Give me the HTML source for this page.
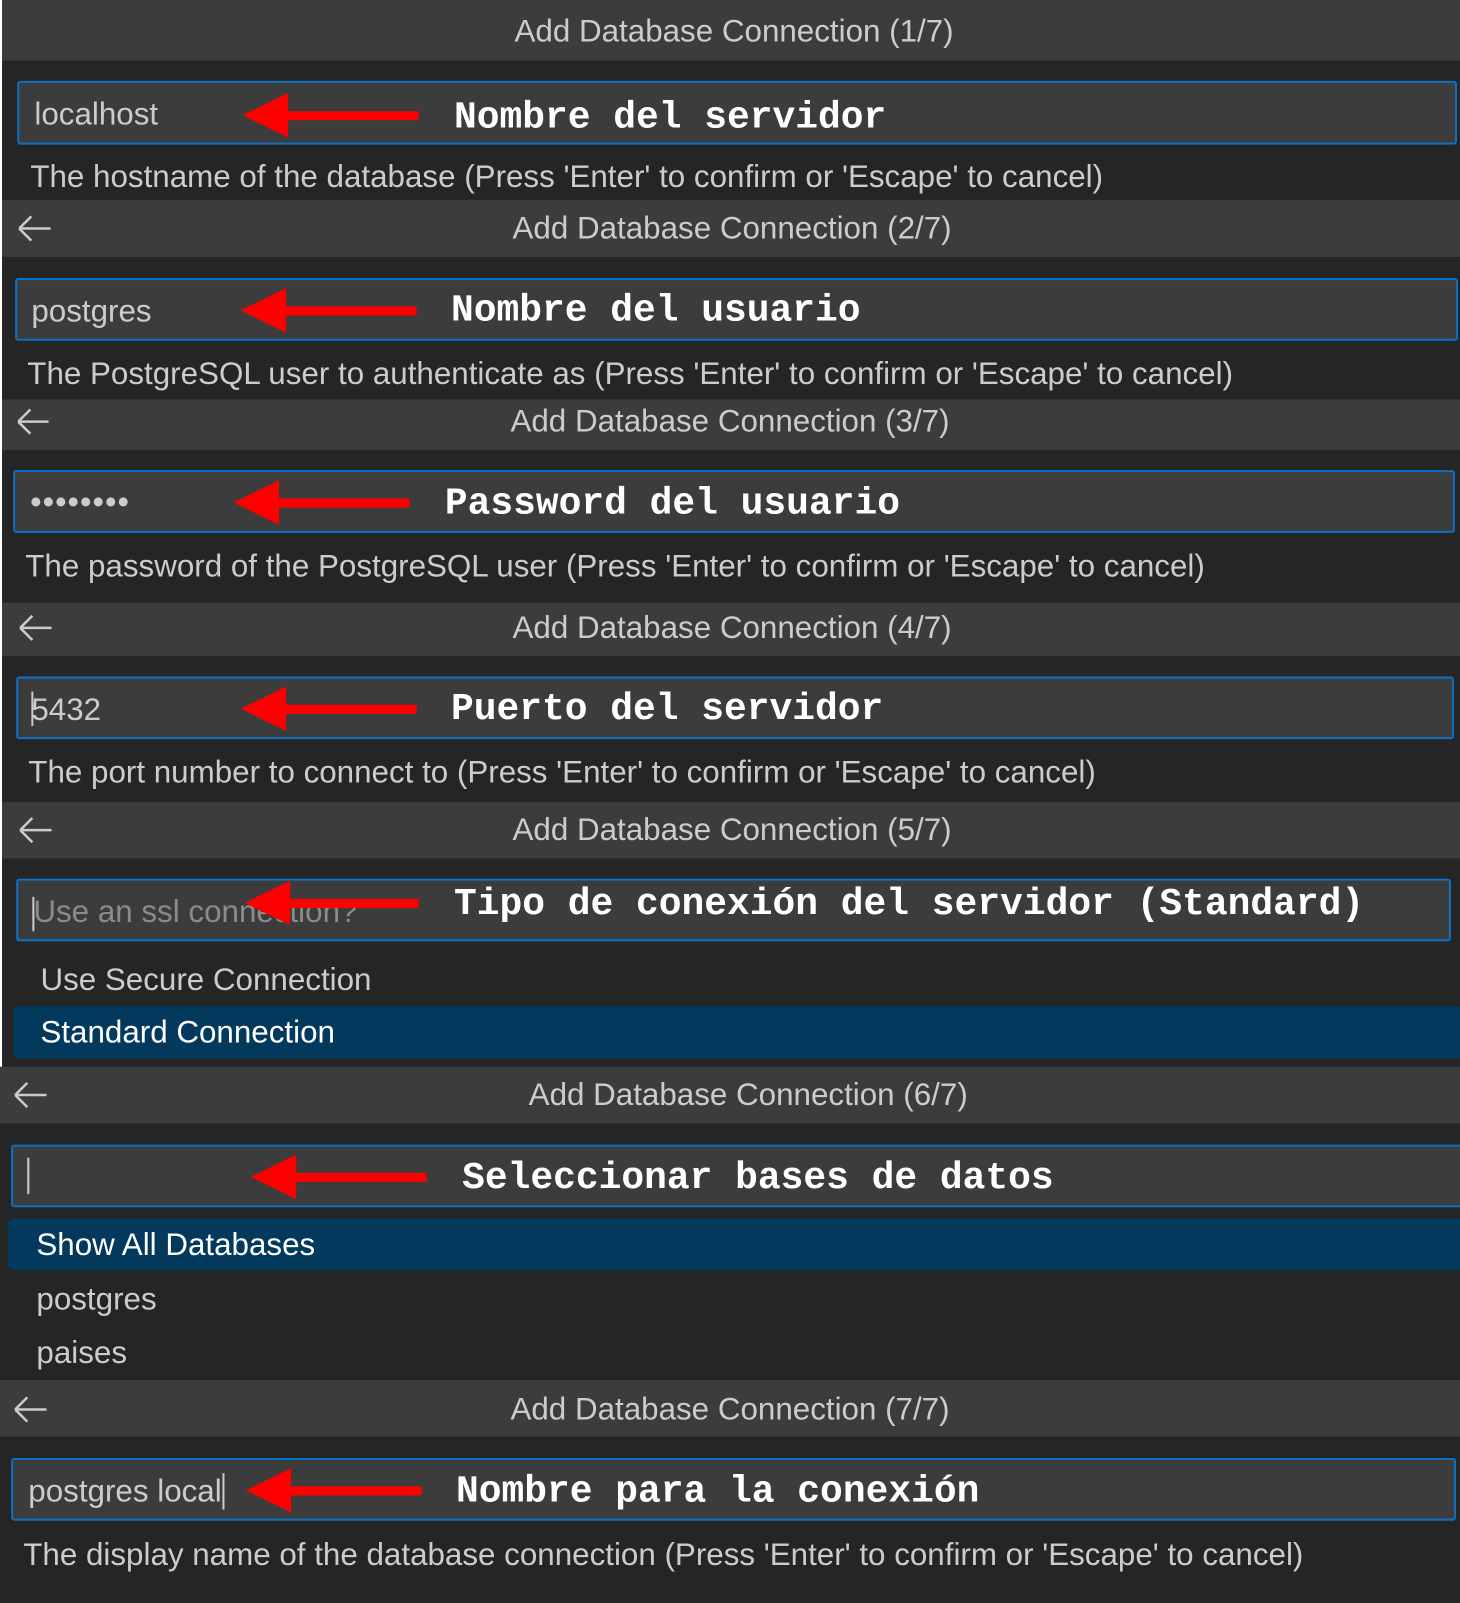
<!DOCTYPE html>
<html><head><meta charset="utf-8"><style>
*{margin:0;padding:0;box-sizing:border-box}
body{width:1460px;height:1585px;background:#252526;position:relative;overflow:hidden;font-family:"Liberation Sans",sans-serif}
#w{position:absolute;left:0;top:0;width:1444px;height:1568px;transform:scale(1.0111);transform-origin:0 0}
.a{position:absolute}
.hd{position:absolute;left:0;width:1460px;background:#3c3c3c}
.tt{position:absolute;left:0;width:1460px;text-align:center;color:#cccccc;font-size:31px;line-height:40px}
.inp{position:absolute;background:#3c3c3c;border:2px solid #0e70c0;border-radius:3px}
.txt{position:absolute;color:#cccccc;font-size:31px;line-height:40px;white-space:nowrap}
.lbl{position:absolute;color:#fff;font-family:"Liberation Mono",monospace;font-weight:bold;font-size:37.5px;line-height:44px;white-space:nowrap}
.hl{position:absolute;background:#04395e;border-radius:6px}
.cur{position:absolute;width:2px;background:#ccc}
</style></head><body><div id="w">
<div class="a" style="left:0;top:0;width:2px;height:1055px;background:#fff;z-index:5"></div>

<div class="hd" style="top:0;height:60px"></div>
<div class="tt" style="top:11px;left:-4px">Add Database Connection (1/7)</div>
<div class="inp" style="left:17px;top:80px;width:1424px;height:63px"></div>
<div class="txt" style="left:34px;top:93px">localhost</div>
<div class="txt" style="left:30px;top:155px">The hostname of the database (Press 'Enter' to confirm or 'Escape' to cancel)</div>

<div class="hd" style="top:198px;height:56px"></div>
<div class="tt" style="top:206px;left:-6px">Add Database Connection (2/7)</div>
<div class="inp" style="left:15px;top:275px;width:1427px;height:62px"></div>
<div class="txt" style="left:31px;top:288px">postgres</div>
<div class="txt" style="left:27px;top:350px">The PostgreSQL user to authenticate as (Press 'Enter' to confirm or 'Escape' to cancel)</div>

<div class="hd" style="top:395px;height:50px"></div>
<div class="tt" style="top:397px;left:-8px">Add Database Connection (3/7)</div>
<div class="inp" style="left:13px;top:465px;width:1426px;height:62px"></div>
<div class="txt" style="left:30px;top:477px;letter-spacing:1.5px;font-weight:bold">••••••••</div>
<div class="txt" style="left:25px;top:540px">The password of the PostgreSQL user (Press 'Enter' to confirm or 'Escape' to cancel)</div>

<div class="hd" style="top:596px;height:53px"></div>
<div class="tt" style="top:601px;left:-6px">Add Database Connection (4/7)</div>
<div class="inp" style="left:16px;top:669px;width:1422px;height:62px"></div>
<div class="cur" style="left:31px;top:684px;height:34px"></div>
<div class="txt" style="left:31px;top:682px">5432</div>
<div class="txt" style="left:28px;top:744px">The port number to connect to (Press 'Enter' to confirm or 'Escape' to cancel)</div>

<div class="hd" style="top:793px;height:56px"></div>
<div class="tt" style="top:801px;left:-6px">Add Database Connection (5/7)</div>
<div class="inp" style="left:16px;top:869px;width:1419px;height:62px"></div>
<div class="cur" style="left:32px;top:887px;height:34px"></div>
<div class="txt" style="left:33px;top:882px;color:#8b8b8b">Use an ssl connection?</div>
<div class="txt" style="left:40px;top:949px">Use Secure Connection</div>
<div class="hl" style="left:13px;top:995px;width:1434px;height:52px"></div>
<div class="txt" style="left:40px;top:1001px;color:#fff">Standard Connection</div>

<div class="hd" style="top:1055px;height:56px"></div>
<div class="tt" style="top:1063px;left:10px">Add Database Connection (6/7)</div>
<div class="inp" style="left:11px;top:1132px;width:1460px;height:62px;border-radius:3px 0 0 3px"></div>
<div class="cur" style="left:27px;top:1145px;height:36px"></div>
<div class="hl" style="left:8px;top:1205px;width:1460px;height:51px;border-radius:6px 0 0 6px"></div>
<div class="txt" style="left:36px;top:1211px;color:#fff">Show All Databases</div>
<div class="txt" style="left:36px;top:1265px">postgres</div>
<div class="txt" style="left:36px;top:1318px">paises</div>

<div class="hd" style="top:1365px;height:56px"></div>
<div class="tt" style="top:1374px;left:-8px">Add Database Connection (7/7)</div>
<div class="inp" style="left:11px;top:1442px;width:1429px;height:62px"></div>
<div class="txt" style="left:28px;top:1455px">postgres local<span style="display:inline-block;width:2px;height:36px;background:#ccc;vertical-align:-8px;margin-left:1px"></span></div>
<div class="txt" style="left:23px;top:1518px">The display name of the database connection (Press 'Enter' to confirm or 'Escape' to cancel)</div>

<svg class="a" style="left:0;top:0" width="60" height="1585" fill="none" stroke="#cccccc" stroke-width="2.5">
<path d="M19 226 H50 M19 226 L31 214 M19 226 L31 238"/>
<path d="M18 417 H48 M18 417 L30 405 M18 417 L30 429"/>
<path d="M20 621 H51 M20 621 L32 609 M20 621 L32 633"/>
<path d="M20 821 H51 M20 821 L32 809 M20 821 L32 833"/>
<path d="M15 1083 H46 M15 1083 L27 1071 M15 1083 L27 1095"/>
<path d="M15 1394 H46 M15 1394 L27 1382 M15 1394 L27 1406"/>
</svg>

<svg class="a" style="left:0;top:0;z-index:3" width="1460" height="1585" fill="#ff0000">
<polygon points="240,114 285,92 285,136"/><rect x="283" y="110" width="131" height="9"/>
<polygon points="238,307 283,285 283,329"/><rect x="281" y="303" width="131" height="9"/>
<polygon points="231,497 276,475 276,519"/><rect x="274" y="493" width="131" height="9"/>
<polygon points="238,701 283,679 283,723"/><rect x="281" y="697" width="131" height="9"/>
<polygon points="242,893 287,871 287,915"/><rect x="285" y="889" width="129" height="9"/>
<polygon points="248,1164 293,1142 293,1186"/><rect x="291" y="1160" width="131" height="9"/>
<polygon points="243,1474 288,1452 288,1496"/><rect x="286" y="1470" width="131" height="9"/>
</svg>

<div class="lbl" style="left:449px;top:95px">Nombre del servidor</div>
<div class="lbl" style="left:446px;top:286px">Nombre del usuario</div>
<div class="lbl" style="left:440px;top:477px">Password del usuario</div>
<div class="lbl" style="left:446px;top:680px">Puerto del servidor</div>
<div class="lbl" style="left:449px;top:873px">Tipo de conexión del servidor (Standard)</div>
<div class="lbl" style="left:457px;top:1144px">Seleccionar bases de datos</div>
<div class="lbl" style="left:451px;top:1454px">Nombre para la conexión</div>
</div></body></html>
